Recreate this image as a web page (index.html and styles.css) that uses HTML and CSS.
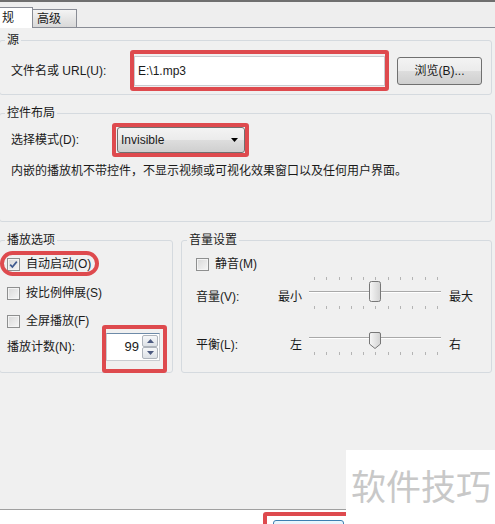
FILE: index.html
```html
<!DOCTYPE html>
<html lang="zh-CN">
<head>
    <meta charset="UTF-8">
    <meta name="viewport" content="width=device-width, initial-scale=1.0">
    <title>播放机属性</title>
    <link rel="stylesheet" href="styles.css">
</head>
<body>
    <div class="window">
        <div class="tabstrip">
            <div class="tab tab-active">规</div>
            <div class="tab">高级</div>
        </div>

        <div class="panel">
            <!-- 源 -->
            <fieldset class="group">
                <legend>源</legend>
                <div class="group-body body-source">
                    <div class="row">
                        <span class="label label-file">文件名或 URL(U):</span>
                        <div class="mark mark-url">
                            <div class="textbox">E:\1.mp3</div>
                        </div>
                        <button class="btn btn-browse">浏览(B)...</button>
                    </div>
                </div>
            </fieldset>

            <!-- 控件布局 -->
            <fieldset class="group group-layout">
                <legend>控件布局</legend>
                <div class="group-body body-layout">
                    <div class="row">
                        <span class="label label-mode">选择模式(D):</span>
                        <div class="mark mark-select">
                            <div class="select">
                                <span>Invisible</span>
                                <svg class="select-arrow" width="7" height="4" viewBox="0 0 7 4"><path d="M0 0H7L3.5 4Z" fill="#000"/></svg>
                            </div>
                        </div>
                    </div>
                    <p class="desc">内嵌的播放机不带控件，不显示视频或可视化效果窗口以及任何用户界面。</p>
                </div>
            </fieldset>

            <div class="group-row">
                <!-- 播放选项 -->
                <fieldset class="group group-play">
                    <legend>播放选项</legend>
                    <div class="group-body body-play">
                        <div class="check-row">
                            <span class="mark mark-ring check-label">
                                <span class="check">
                                    <svg width="11" height="11" viewBox="0 0 11 11"><path d="M2.2 5.6L4.4 8L8.8 2.6" fill="none" stroke="#3f5a8f" stroke-width="1.7"/></svg>
                                </span>
                                <span>自动启动(O)</span>
                            </span>
                        </div>
                        <div class="check-row row-stretch">
                            <span class="check-label">
                                <span class="check"></span>
                                <span>按比例伸展(S)</span>
                            </span>
                        </div>
                        <div class="check-row row-full">
                            <span class="check-label">
                                <span class="check"></span>
                                <span>全屏播放(F)</span>
                            </span>
                        </div>
                        <div class="row row-count">
                            <span class="label label-count">播放计数(N):</span>
                            <div class="mark mark-spin">
                                <div class="spin">
                                    <div class="spin-value">99</div>
                                    <div class="spin-btns">
                                        <div class="spin-btn"><svg width="7" height="4" viewBox="0 0 7 4"><path d="M0 4H7L3.5 0Z" fill="#4c5a80"/></svg></div>
                                        <div class="spin-btn"><svg width="7" height="4" viewBox="0 0 7 4"><path d="M0 0H7L3.5 4Z" fill="#4c5a80"/></svg></div>
                                    </div>
                                </div>
                            </div>
                        </div>
                    </div>
                </fieldset>

                <!-- 音量设置 -->
                <fieldset class="group group-volume">
                    <legend>音量设置</legend>
                    <div class="group-body body-volume">
                        <div class="check-row">
                            <span class="check-label">
                                <span class="check"></span>
                                <span>静音(M)</span>
                            </span>
                        </div>
                        <div class="row slider-row row-vol">
                            <span class="label label-slider">音量(V):</span>
                            <span class="slider-min">最小</span>
                            <svg class="slider" width="132" height="32" viewBox="0 0 132 32">
                                <defs>
                                    <linearGradient id="thumbA" x1="0" y1="0" x2="1" y2="0">
                                        <stop offset="0" stop-color="#f7f7f7"/>
                                        <stop offset="1" stop-color="#d2d2d2"/>
                                    </linearGradient>
                                </defs>
                                <g stroke="#b4b4b4" stroke-width="1">
                                    <path d="M5.5 0V3M17.5 0V3M30.5 0V3M42.5 0V3M54.5 0V3M66.5 0V3M79.5 0V3M91.5 0V3M103.5 0V3M116.5 0V3M128.5 0V3"/>
                                    <path d="M5.5 29V32M17.5 29V32M30.5 29V32M42.5 29V32M54.5 29V32M66.5 29V32M79.5 29V32M91.5 29V32M103.5 29V32M116.5 29V32M128.5 29V32"/>
                                </g>
                                <path d="M0 14.5H132" stroke="#a9a9a9"/>
                                <path d="M0 15.5H132" stroke="#ffffff"/>
                                <rect x="60.5" y="4.5" width="11" height="20" rx="2" fill="url(#thumbA)" stroke="#777"/>
                            </svg>
                            <span class="slider-max">最大</span>
                        </div>
                        <div class="row slider-row row-bal">
                            <span class="label label-slider">平衡(L):</span>
                            <span class="slider-min">左</span>
                            <svg class="slider" width="132" height="28" viewBox="0 0 132 28">
                                <defs>
                                    <linearGradient id="thumbB" x1="0" y1="0" x2="1" y2="0">
                                        <stop offset="0" stop-color="#f7f7f7"/>
                                        <stop offset="1" stop-color="#d2d2d2"/>
                                    </linearGradient>
                                </defs>
                                <path d="M5.5 21V24M17.5 21V24M30.5 21V24M42.5 21V24M54.5 21V24M66.5 21V24M79.5 21V24M91.5 21V24M103.5 21V24M116.5 21V24M128.5 21V24" stroke="#b4b4b4"/>
                                <path d="M0 6.5H132" stroke="#a9a9a9"/>
                                <path d="M0 7.5H132" stroke="#ffffff"/>
                                <path d="M60.5 3Q60.5 1.5 62 1.5H70Q71.5 1.5 71.5 3V13L66 17.5L60.5 13Z" fill="url(#thumbB)" stroke="#777"/>
                            </svg>
                            <span class="slider-max">右</span>
                        </div>
                    </div>
                </fieldset>
            </div>
        </div>

        <div class="footer">
            <div class="mark mark-ok">
                <button class="btn btn-ok">确定</button>
            </div>
        </div>

        <div class="watermark">软件技巧</div>
    </div>
</body>
</html>
```

FILE: styles.css
```css
:root {
    --panel-bg: #f0f0f0;
    --text-color: #1a1a1a;
    --group-border: #d5dadf;
    --tab-border: #898c95;
    --mark-red: #de4a4e;
    --ctrl-border: #707070;
}

* {
    box-sizing: border-box;
    margin: 0;
    padding: 0;
}

body {
    font-family: "Liberation Sans", "Noto Sans CJK SC", sans-serif;
    font-size: 12px;
    line-height: 14px;
    color: var(--text-color);
    background-color: var(--panel-bg);
}

.window {
    position: relative;
    width: 495px;
    height: 524px;
    display: flex;
    flex-direction: column;
    overflow: hidden;
}

/* tabs */
.tabstrip {
    display: flex;
    align-items: flex-end;
    height: 28px;
    border-top: 2px solid #6f6f6f;
    border-bottom: 1px solid var(--tab-border);
    background-color: #eeeeee;
}

.tab {
    display: flex;
    align-items: center;
    height: 18px;
    width: 44px;
    padding-left: 4px;
    border-top: 1px solid var(--tab-border);
    border-right: 1px solid var(--tab-border);
    background: linear-gradient(#f4f4f4, #e6e6e6 50%, #d9d9d9);
}

.tab-active {
    height: 21px;
    width: 33px;
    padding-left: 2px;
    margin-bottom: -1px;
    background: #ffffff;
}

/* panel + group boxes */
.panel {
    flex: 1;
    margin: 0 3px 0 -1px;
    padding-top: 5px;
}

.group {
    min-width: 0;
    border: 1px solid var(--group-border);
    border-radius: 3px;
    padding: 0;
}

.group legend {
    margin-left: 5px;
    padding: 0 2px;
    line-height: 14px;
}

.group-layout {
    margin-top: 11px;
}

.group-row {
    display: flex;
    gap: 8px;
    margin-top: 11px;
}

.group-play {
    width: 174px;
}

.group-volume {
    flex: 1;
}

.group-volume legend {
    margin-left: 5px;
}

.body-source {
    padding: 9px 0 8px 11px;
}

.body-layout {
    padding: 7px 0 43px 11px;
}

.body-play {
    padding: 7px 0 11px 7px;
}

.body-volume {
    padding: 7px 0 13px 14px;
}

.row {
    display: flex;
    align-items: center;
}

.label-file {
    width: 123px;
}

.label-mode {
    width: 106px;
}

.label-count {
    width: 99px;
}

.desc {
    margin-top: 11px;
}

/* controls */
.textbox {
    width: 251px;
    height: 30px;
    padding: 0 3px;
    display: flex;
    align-items: center;
    background: #ffffff;
    border: 1px solid #c9ccd1;
}

.btn {
    font-family: inherit;
    font-size: 12px;
    line-height: 14px;
    color: var(--text-color);
    border: 1px solid var(--ctrl-border);
    border-radius: 3px;
    background: linear-gradient(#f3f3f3, #ebebeb 50%, #dddddd 51%, #cfcfcf);
}

.btn-browse {
    width: 85px;
    height: 28px;
    margin-left: 12px;
}

.select {
    width: 128px;
    height: 26px;
    display: flex;
    align-items: center;
    justify-content: space-between;
    padding: 0 6px 0 3px;
    border: 1px solid var(--ctrl-border);
    border-radius: 3px;
    background: linear-gradient(#f3f3f3, #ebebeb 50%, #dddddd 51%, #cfcfcf);
}

.check-row {
    display: flex;
    align-items: center;
    height: 20px;
}

.row-stretch {
    margin-top: 9px;
}

.row-full {
    margin-top: 8px;
}

.row-count {
    margin-top: 2px;
}

.check-label {
    display: inline-flex;
    align-items: center;
    gap: 6px;
}

.check {
    width: 13px;
    height: 13px;
    display: flex;
    align-items: center;
    justify-content: center;
    border: 1px solid #8e8f8f;
    background: linear-gradient(135deg, #d8d8d8, #f6f6f6);
    box-shadow: inset 0 0 0 1px #f4f4f4;
}

.spin {
    width: 54px;
    height: 28px;
    display: flex;
    align-items: center;
    background: #ffffff;
    border: 1px solid #c9ccd1;
    border-top-color: #6d8aa8;
}

.spin-value {
    flex: 1;
    text-align: right;
    padding-right: 3px;
    font-size: 13px;
}

.spin-btns {
    width: 16px;
    display: flex;
    flex-direction: column;
    margin-right: 1px;
}

.spin-btn {
    height: 12px;
    display: flex;
    align-items: center;
    justify-content: center;
    border: 1px solid #aeb4bc;
    border-radius: 2px;
    background: linear-gradient(#f6f7f9, #dde1e6);
}

/* sliders */
.slider-row {
    margin-top: 3px;
}

.row-bal {
    margin-top: 22px;
}

.label-slider {
    width: 81px;
}

.slider-min {
    width: 25px;
    text-align: right;
}

.slider {
    display: block;
    margin-left: 7px;
}

.slider-max {
    margin-left: 8px;
}

.row-vol .label-slider,
.row-vol .slider-min,
.row-vol .slider-max {
    padding-top: 7px;
}

/* red annotation frames */
.mark {
    position: relative;
}

.mark::after {
    content: '';
    position: absolute;
    border: 4px solid var(--mark-red);
    border-radius: 3px;
    pointer-events: none;
}

.mark-url::after {
    inset: -6px -4px -5px -4px;
}

.mark-select::after {
    inset: -4px -4px -4px -5px;
}

.mark-ring::after {
    inset: -6px -8px -5px -7px;
    border-radius: 15px;
}

.mark-spin::after {
    inset: -8px -7px -12px -4px;
}

.mark-ok {
    margin: 10px 0 0 273px;
    width: 71px;
}

.mark-ok::after {
    inset: -8px -10px -8px -10px;
}

/* bottom bar */
.footer {
    height: 15px;
    border-top: 1px solid #a0a0a0;
    background: #ffffff;
}

.btn-ok {
    display: block;
    width: 71px;
    height: 23px;
    padding-top: 0;
    border-color: #3c7fb1;
    background: linear-gradient(#eaf6fd, #d9f0fc 50%, #bee6fd 51%, #a7d9f5);
}

.watermark {
    position: absolute;
    left: 346px;
    top: 450px;
    right: 0;
    bottom: 0;
    padding: 15px 0 0 5px;
    background: #ffffff;
    color: #c8c8c8;
    font-family: "Noto Sans CJK SC", sans-serif;
    font-size: 35px;
    line-height: 40px;
    white-space: nowrap;
}
```
